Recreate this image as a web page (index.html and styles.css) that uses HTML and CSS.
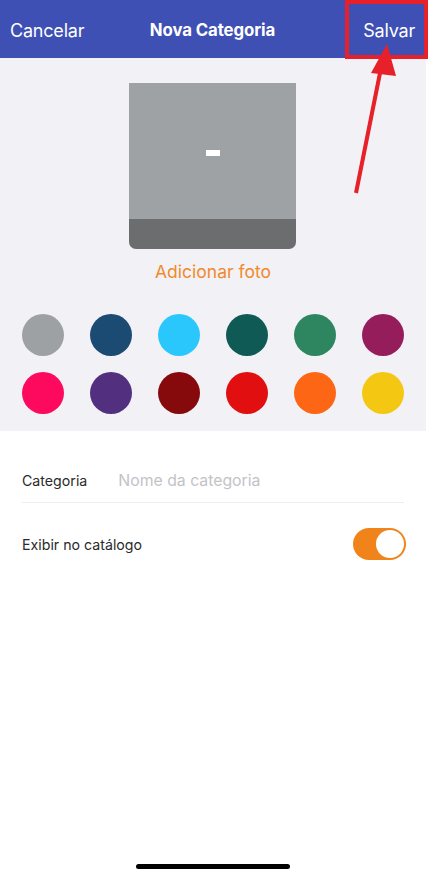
FILE: index.html
```html
<!DOCTYPE html>
<html lang="pt">
<head>
<meta charset="utf-8">
<link rel="stylesheet" href="styles.css">
</head>
<body>
<div class="page">
  <header class="nav">
    <span class="nav-btn">Cancelar</span>
    <span class="nav-title">Nova Categoria</span>
    <span class="nav-btn save">Salvar</span>
  </header>
  <section class="top">
    <div class="photo">
      <div class="photo-main"><span class="dash"></span></div>
      <div class="photo-band"></div>
    </div>
    <div class="add-photo">Adicionar foto</div>
    <div class="colors">
      <span class="dot" style="background:#9da1a4"></span>
      <span class="dot" style="background:#1b4a73"></span>
      <span class="dot" style="background:#2ac7fd"></span>
      <span class="dot" style="background:#0f5a55"></span>
      <span class="dot" style="background:#2d8660"></span>
      <span class="dot" style="background:#961d5c"></span>
      <span class="dot" style="background:#fd0a5f"></span>
      <span class="dot" style="background:#53307f"></span>
      <span class="dot" style="background:#860a0c"></span>
      <span class="dot" style="background:#e10f10"></span>
      <span class="dot" style="background:#fd6614"></span>
      <span class="dot" style="background:#f3c712"></span>
    </div>
  </section>
  <section class="form">
    <div class="row row-border">
      <span class="label">Categoria</span>
      <span class="placeholder">Nome da categoria</span>
    </div>
    <div class="row row-toggle">
      <span class="label">Exibir no catálogo</span>
      <span class="toggle"><span class="knob"></span></span>
    </div>
  </section>
  <div class="home-bar"></div>
  <div class="highlight"></div>
  <svg class="arrow" width="430" height="220" viewBox="0 0 430 220">
    <line x1="356" y1="193" x2="381" y2="68" stroke="#e8202a" stroke-width="4"/>
    <polygon points="387,44 371,73 396,76" fill="#e8202a"/>
  </svg>
</div>
</body>
</html>
```
FILE: styles.css
```css
* { box-sizing: border-box; }
html, body { margin: 0; padding: 0; background: #fff; }
body { font-family: Inter, "Noto Sans", sans-serif; }
.page { position: relative; width: 430px; height: 875px; background: #fff; }
.nav {
  width: 426px; height: 58px; background: #3e50b4;
  display: grid; grid-template-columns: 1fr auto 1fr; align-items: center;
  padding: 2px 11px 0 10px; color: #fff;
}
.nav-btn { font-size: 18px; letter-spacing: -0.2px; }
.save { justify-self: end; }
.nav-title { font-size: 16.8px; font-weight: 700; letter-spacing: -0.1px; }
.top {
  width: 426px; background: #f2f1f6;
  display: flex; flex-direction: column; align-items: center;
  padding: 25px 0 17px;
}
.photo { width: 167px; height: 166px; display: flex; flex-direction: column; border-radius: 0 0 7px 7px; overflow: hidden; margin-left: -1px; }
.photo-main { flex: 1; background: #9ea2a5; display: flex; align-items: center; justify-content: center; }
.dash { width: 14px; height: 6px; background: #fff; margin-top: 4px; }
.photo-band { height: 30px; background: #6c6d6f; }
.add-photo { color: #f08a2c; font-size: 17.5px; margin-top: 12px; height: 22px; line-height: 22px; }
.colors {
  margin-top: 31px; display: grid; grid-template-columns: repeat(6, 42px);
  column-gap: 26px; row-gap: 16px; align-self: flex-start; margin-left: 22px;
}
.dot { width: 42px; height: 42px; border-radius: 50%; display: block; }
.form { padding: 0 22px; width: 426px; }
.row { display: flex; align-items: center; font-size: 14.2px; }
.row-border { height: 72px; padding-top: 28px; border-bottom: 1px solid #eeeef2; }
.label { color: #2a2a2a; }
.placeholder { color: #c3c3c7; margin-left: 31px; font-size: 15.8px; }
.row-toggle { height: 82px; justify-content: space-between; }
.toggle {
  width: 53px; height: 32px; border-radius: 16px; background: #f0841a;
  display: flex; align-items: center; justify-content: flex-end; padding-right: 2px; margin-right: -2px;
}
.knob { width: 28px; height: 28px; border-radius: 50%; background: #fff; }
.home-bar {
  position: absolute; left: 136px; top: 864px; width: 154px; height: 5px;
  border-radius: 3px; background: #000;
}
.highlight {
  position: absolute; left: 345px; top: 0; width: 83px; height: 59px;
  border: 4px solid #e8202a;
}
.arrow { position: absolute; left: 0; top: 0; }
```
